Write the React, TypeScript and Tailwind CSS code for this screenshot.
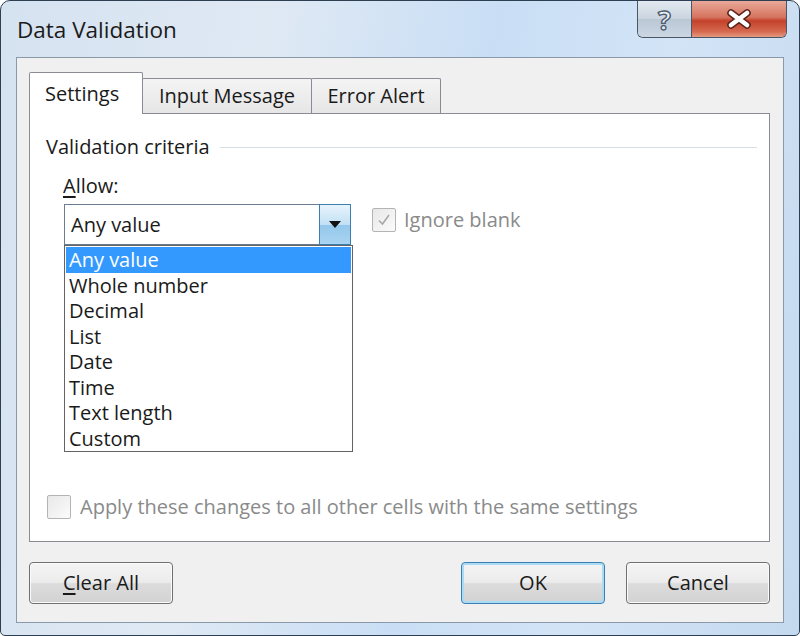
import React from "react";

const options = ["Any value", "Whole number", "Decimal", "List", "Date", "Time", "Text length", "Custom"];

const Checkbox = ({ checked }: { checked?: boolean }) => (
  <div className="w-[24px] h-[24px] border border-[#b4b4b4] rounded-[2px] bg-[linear-gradient(135deg,#e8e8e8,#fbfbfb)] flex items-center justify-center shrink-0">
    {checked && (
      <svg width="16" height="16" viewBox="0 0 16 16">
        <path d="M3 8.5 L6.5 12 L13 3" fill="none" stroke="#a7a7a7" strokeWidth="1.6" />
      </svg>
    )}
  </div>
);

const Button = ({ children, primary }: { children: React.ReactNode; primary?: boolean }) => (
  <button
    className={
      "w-[144px] h-[42px] rounded-[4px] border text-[20px] text-[#1a1a1a] bg-[linear-gradient(#f4f4f4,#ececec_48%,#dcdcdc_52%,#d2d2d2)] " +
      (primary
        ? "border-[#3c7fb1] shadow-[inset_0_0_0_2px_#a9dcf4]"
        : "border-[#707070] shadow-[inset_0_0_0_1px_#fbfbfb]")
    }
  >
    {children}
  </button>
);

export default function App() {
  return (
    <div className="w-[800px] h-[636px] bg-white font-['Open_Sans',sans-serif] text-[#1a1a1a]">
      <div className="h-full flex flex-col rounded-t-[10px] rounded-b-[5px] border border-[#2f3f52] bg-[linear-gradient(100deg,#d5e2f0_0%,#dfe9f4_30%,#c9def5_55%,#d3e4f6_75%,#c4d9ef_100%)] px-[15px] pb-[12px]">
        {/* title bar */}
        <div className="h-[56px] flex items-start justify-between">
          <div className="mt-[12px] ml-[1px] text-[22.5px] text-[#1b1b1b]">Data Validation</div>
          <div className="flex -mr-[3px] h-[37px] rounded-b-[6px] border border-t-0 border-[#4a5566] overflow-hidden">
            <div className="w-[54px] flex items-center justify-center border-r border-[#4a5566] bg-[linear-gradient(#e3e9f0,#cad4df_50%,#bac7d5_51%,#cbd6e2)]">
              <span className="text-[27px] font-bold text-[#e9eef4] [-webkit-text-stroke:1.4px_#4d5d72] leading-none">?</span>
            </div>
            <div className="w-[94px] flex items-center justify-center bg-[linear-gradient(#e9a99a,#d5745f_45%,#c4412a_55%,#d56a50_85%,#e49a82)]">
              <svg width="28" height="22" viewBox="0 0 28 22">
                <path d="M6 5 L22 17 M22 5 L6 17" stroke="#5a2218" strokeWidth="7.5" strokeLinecap="round" />
                <path d="M6 5 L22 17 M22 5 L6 17" stroke="#ffffff" strokeWidth="4.6" strokeLinecap="round" />
              </svg>
            </div>
          </div>
        </div>

        {/* client area */}
        <div className="flex-1 flex flex-col border border-[#8a99aa] bg-[#f0f0f0] pl-[12px] pr-[13px] pt-[14px]">
          {/* tabs */}
          <div className="flex items-end h-[41px] text-[20px]">
            <div className="relative z-10 h-[42px] -mb-px w-[114px] bg-white border border-b-0 border-[#898c95] rounded-t-[2px] flex items-center pl-[15px]">
              Settings
            </div>
            <div className="h-[35px] w-[170px] -ml-px bg-[linear-gradient(#f4f4f4,#e6e6e6)] border border-b-0 border-[#898c95] rounded-t-[2px] flex items-center justify-center">
              Input Message
            </div>
            <div className="h-[35px] w-[130px] -ml-px bg-[linear-gradient(#f4f4f4,#e6e6e6)] border border-b-0 border-[#898c95] rounded-t-[2px] flex items-center justify-center">
              Error Alert
            </div>
          </div>

          {/* panel */}
          <div className="relative h-[429px] bg-white border border-[#898c95] flex flex-col pt-[20px] pl-[16px] pr-[12px] pb-[19px] text-[20px]">
            <div className="flex items-center gap-[10px] h-[26px]">
              <span>Validation criteria</span>
              <div className="flex-1 h-px bg-[#d5dfe5]" />
            </div>

            <div className="mt-[13px] ml-[17px] h-[26px] leading-[26px]">
              <span className="underline underline-offset-[3px]">A</span>llow:
            </div>

            <div className="mt-[5px] ml-[18px] flex items-start">
              <div className="w-[287px] h-[41px] border border-[#6c7d8f] bg-white flex">
                <div className="flex-1 flex items-center pl-[6px]">Any value</div>
                <div className="w-[32px] -my-px -mr-px border border-[#3c7fb1] bg-[linear-gradient(#e8f4fc,#c2e0f5_50%,#94c7eb_51%,#a9d4f1)] flex items-center justify-center">
                  <svg width="12" height="8" viewBox="0 0 12 8">
                    <path d="M0 0 H12 L6 7 Z" fill="#111" />
                  </svg>
                </div>
              </div>
              <div className="ml-[21px] mt-[1px] flex items-center gap-[8px] text-[#8a8a8a]">
                <Checkbox checked />
                <span>Ignore blank</span>
              </div>
            </div>

            <div className="mt-auto ml-[1px] flex items-center gap-[9px] text-[#8a8a8a]">
              <Checkbox />
              <span>Apply these changes to all other cells with the same settings</span>
            </div>

            {/* open dropdown list */}
            <div className="absolute left-[34px] top-[131px] w-[289px] h-[207px] bg-white border border-[#646464] pt-[1px] px-[1px] z-20">
              {options.map((o, i) => (
                <div
                  key={o}
                  className={
                    "h-[25.5px] leading-[25.5px] pl-[3px] " + (i === 0 ? "bg-[#3399ff] text-white" : "text-[#1a1a1a]")
                  }
                >
                  {o}
                </div>
              ))}
            </div>
          </div>

          {/* buttons */}
          <div className="mt-[20px] flex items-center">
            <Button>
              <span className="underline underline-offset-[3px]">C</span>lear All
            </Button>
            <div className="ml-auto flex gap-[21px]">
              <Button primary>OK</Button>
              <Button>Cancel</Button>
            </div>
          </div>
        </div>
      </div>
    </div>
  );
}
